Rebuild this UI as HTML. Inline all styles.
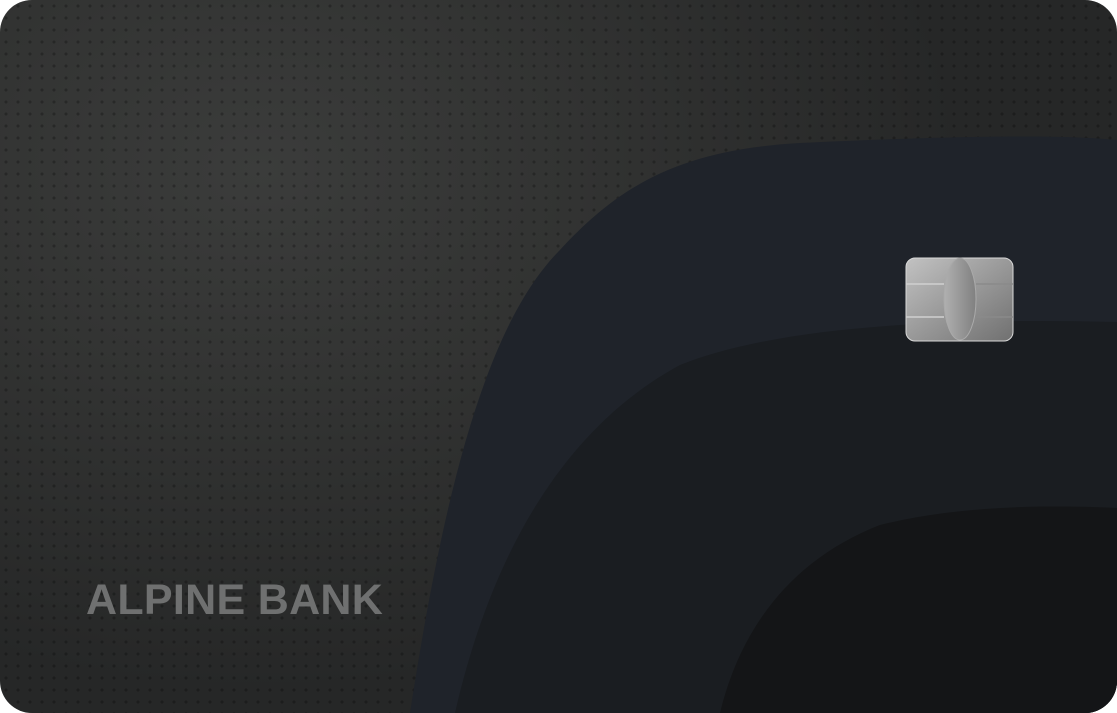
<!DOCTYPE html>
<html><head><style>
html,body{margin:0;padding:0;background:#fff;width:1117px;height:713px;overflow:hidden}
.card{position:absolute;left:0;top:0;width:1117px;height:713px;border-radius:32px;overflow:hidden;
background:radial-gradient(ellipse 700px 520px at 260px 170px,#3b3c3b 0%,#323332 45%,#262727 100%)}
.dots{position:absolute;left:0;top:0;width:1117px;height:713px;background-image:radial-gradient(circle,rgba(0,0,0,.26) 1.3px,transparent 1.8px);background-size:12px 12px}
svg{position:absolute;left:0;top:0}
.name{position:absolute;left:86px;top:576px;font:bold 43px "Liberation Sans",sans-serif;color:#6f7070;letter-spacing:0.3px;white-space:nowrap}
</style></head><body>
<div class="card">
<div class="dots"></div>
<svg width="1117" height="713">
<defs>
<linearGradient id="chip" x1="0" y1="0" x2="1" y2="1"><stop offset="0" stop-color="#c2c2c2"/><stop offset="1" stop-color="#707070"/></linearGradient>
<linearGradient id="ov" x1="0" y1="0" x2="1" y2="0"><stop offset="0" stop-color="#b0b0b0"/><stop offset="1" stop-color="#808080"/></linearGradient>
</defs>
<path d="M410 713 C440 520 480 330 560 250 C620 185 680 150 800 143 C950 136 1060 134 1117 140 L1117 713Z" fill="#1f232a"/>
<path d="M455 713 C490 560 560 430 680 365 C780 325 950 318 1117 322 L1117 713Z" fill="#1a1d21"/>
<path d="M720 713 C740 630 790 560 880 525 C960 505 1050 505 1117 508 L1117 713Z" fill="#141517"/>
<rect x="906" y="258" width="107" height="83" rx="9" fill="url(#chip)" stroke="#d8d8d8" stroke-width="1"/>
<line x1="906" y1="284" x2="944" y2="284" stroke="#d0d0d0" stroke-width="1.5"/>
<line x1="906" y1="317" x2="944" y2="317" stroke="#d0d0d0" stroke-width="1.5"/>
<line x1="976" y1="284" x2="1013" y2="284" stroke="#8a8a8a" stroke-width="1.5"/>
<line x1="976" y1="317" x2="1013" y2="317" stroke="#8a8a8a" stroke-width="1.5"/>
<ellipse cx="960" cy="299" rx="16" ry="41" fill="url(#ov)" stroke="#aaa" stroke-width="1"/>
</svg>
<div class="name">ALPINE BANK</div>
</div>
</body></html>
